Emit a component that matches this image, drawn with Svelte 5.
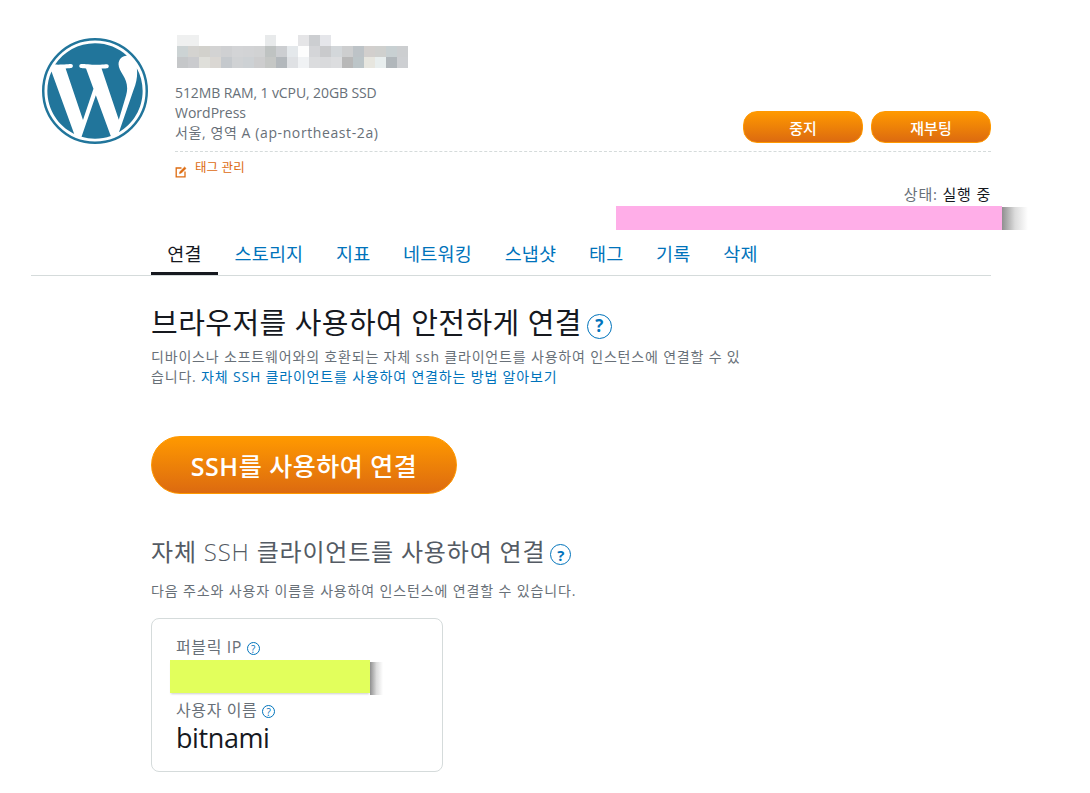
<script>
  const tabs = ["연결", "스토리지", "지표", "네트워킹", "스냅샷", "태그", "기록", "삭제"];
  const mosaic = [
    ["eff0f0", "eff0f0", "fff", "fff", "fff", "fff", "fff", "fff", "e8eaeb", "fff", "fff", "e5e5e7", "ccced1", "e5e6ea", "fff", "fff", "fff", "fff", "fff", "fff", "fff"],
    ["ccd3d4", "d4d3d0", "d2d1cc", "d3d3d3", "cfd0d2", "d3d4d6", "d2d3d5", "d1d2d3", "bfc3c2", "ccced1", "e4e8eb", "fdfdfd", "d4d5d8", "c9cacc", "d3d7da", "cdcecf", "bdc3c7", "d2cfcd", "cfd0ce", "c8d0d2", "ccced0"],
    ["c5c7c9", "cacbce", "dfdfda", "dad7d3", "c5c9cd", "d0d2d4", "cdd1d4", "cdcdce", "c5c7c5", "b3b8bc", "dfe1e4", "f0f2f4", "dbdcde", "d9dadc", "dcdddf", "b8b8b8", "bcc5c8", "e7e6df", "e8eeee", "b1b7bb", "cdcfd2"]
  ];
</script>

<div class="page">
  <header class="head">
    <svg class="logo" viewBox="0 0 24 24" aria-label="WordPress">
      <circle cx="12" cy="12" r="11.72" fill="none" stroke="#21759b" stroke-width=".56" />
      <path fill="#21759b" d="M21.469 6.825c.84 1.537 1.318 3.3 1.318 5.175 0 3.979-2.156 7.456-5.363 9.325l3.295-9.527c.615-1.54.82-2.771.82-3.864 0-.405-.026-.78-.07-1.11m-7.981.105c.647-.03 1.232-.105 1.232-.105.582-.075.514-.93-.067-.899 0 0-1.755.135-2.88.135-1.064 0-2.85-.15-2.85-.15-.585-.03-.661.855-.075.885 0 0 .54.061 1.125.09l1.68 4.605-2.37 7.08L5.354 6.9c.649-.03 1.234-.1 1.234-.1.585-.075.516-.93-.065-.896 0 0-1.746.138-2.874.138-.2 0-.438-.008-.69-.015C4.911 3.15 8.235 1.215 12 1.215c2.809 0 5.365 1.072 7.286 2.833-.046-.003-.091-.009-.141-.009-1.06 0-1.812.923-1.812 1.914 0 .89.513 1.643 1.06 2.531.411.72.89 1.643.89 2.977 0 .915-.354 1.994-.821 3.479l-1.075 3.585-3.9-11.61.001.014zM12 22.784c-1.059 0-2.081-.153-3.048-.437l3.237-9.406 3.315 9.087c.024.053.05.101.078.149-1.12.393-2.325.609-3.582.609M1.211 12c0-1.564.336-3.05.935-4.39L7.29 21.709C3.694 19.96 1.212 16.271 1.211 12" />
    </svg>
    <div class="info">
      <div class="mosaic">
        {#each mosaic as row}
          {#each row as c}
            <i style="background:#{c}"></i>
          {/each}
        {/each}
      </div>
      <div class="specs-row">
        <div class="specs">
          <div class="plan">512MB RAM, 1 vCPU, 20GB SSD</div>
          <div>WordPress</div>
          <div class="loc">서울, 영역 A (ap-northeast-2a)</div>
        </div>
        <div class="actions">
          <button class="btn" type="button">중지</button>
          <button class="btn" type="button">재부팅</button>
        </div>
      </div>
      <div class="tagline">
        <svg class="edit" viewBox="0 0 12 12" fill="none" stroke="#dd6b10" stroke-width="1.3">
          <path d="M6.5 2H1.2v8.8H10V5.5" />
          <path d="M4.5 7.6l.4-1.9L9.6 1l1.4 1.4-4.7 4.7z" fill="#dd6b10" stroke-width=".6" />
        </svg>
        <span>태그 관리</span>
      </div>
      <div class="status">상태: <b>실행 중</b></div>
    </div>
  </header>
  <div class="redact-pink"></div>

  <nav class="tabs">
    {#each tabs as t, i}
      <span class="tab" class:active={i === 0}>{t}</span>
    {/each}
  </nav>

  <main class="content">
    <h1>브라우저를 사용하여 안전하게 연결<span class="help big">?</span></h1>
    <p class="desc first">
      디바이스나 소프트웨어와의 호환되는 자체 ssh 클라이언트를 사용하여 인스턴스에 연결할 수 있<br />습니다. <a href="#top">자체 SSH 클라이언트를 사용하여 연결하는 방법 알아보기</a>
    </p>

    <button class="btn large" type="button"><span class="latin">SSH</span>를 사용하여 연결</button>

    <h2>자체 <span class="thin">SSH</span> 클라이언트를 사용하여 연결<span class="help mid">?</span></h2>
    <p class="desc second">다음 주소와 사용자 이름을 사용하여 인스턴스에 연결할 수 있습니다.</p>

    <section class="card">
      <div class="label">퍼블릭 IP <span class="help small">?</span></div>
      <div class="redact-yellow"></div>
      <div class="label">사용자 이름 <span class="help small">?</span></div>
      <div class="value">bitnami</div>
    </section>
  </main>
</div>

<style>
  :global(body) {
    background: #fff;
  }

  .page {
    height: 793px;
    overflow: hidden;
    box-sizing: border-box;
    padding: 35px 99px 0 31px;
    font-family: "Open Sans", "Noto Sans CJK KR", sans-serif;
    color: #687078;
  }

  .head {
    display: flex;
  }

  .logo {
    width: 106px;
    height: 106px;
    margin: 3px 27px 0 11px;
    flex: none;
  }

  .info {
    flex: 1;
    min-width: 0;
  }

  .mosaic {
    display: grid;
    grid-template-columns: repeat(21, 11px);
    grid-auto-rows: 11px;
    margin-left: 2px;
  }

  .specs-row {
    display: flex;
    justify-content: space-between;
    align-items: flex-end;
    margin-top: 15px;
    padding-bottom: 8px;
    border-bottom: 1px dashed #d5dbdb;
  }

  .specs {
    font-size: 14px;
    line-height: 20px;
  }

  .plan {
    letter-spacing: -0.1px;
  }

  .loc {
    letter-spacing: 0.6px;
  }

  .actions {
    display: flex;
    gap: 8px;
  }

  .btn {
    width: 120px;
    height: 32px;
    padding: 0;
    border: 1px solid #f90;
    border-radius: 14px;
    background: linear-gradient(#f90, #dc6a10);
    color: #fff;
    font: 500 15px "Open Sans", "Noto Sans CJK KR", sans-serif;
  }

  .tagline {
    display: flex;
    align-items: flex-start;
    gap: 8px;
    height: 25px;
    margin-top: 8px;
    font-size: 12.5px;
    line-height: 16px;
    letter-spacing: 0.1px;
    color: #dd6b10;
  }

  .edit {
    width: 12px;
    height: 12px;
    margin-top: 6px;
  }

  .status {
    text-align: right;
    font-size: 15px;
    line-height: 18px;
    letter-spacing: 0.8px;
  }

  .status b {
    font-weight: 400;
    color: #16191f;
  }

  .redact-pink {
    position: relative;
    width: 386px;
    height: 24px;
    margin: 3px 0 0 585px;
    background: #ffaee8;
  }

  .redact-pink::after {
    content: "";
    position: absolute;
    left: 100%;
    top: 1px;
    width: 26px;
    height: 23px;
    background: linear-gradient(90deg, #8f8f8f, #dcdcdc 50%, #fff);
  }

  .tabs {
    display: flex;
    margin-top: 6px;
    padding-left: 120px;
    border-bottom: 1px solid #d5dbdb;
  }

  .tab {
    padding: 0 16.33px;
    height: 39px;
    box-sizing: border-box;
    font-size: 18.5px;
    line-height: 36px;
    letter-spacing: 0.2px;
    color: #0073bb;
  }

  .tab.active {
    color: #16191f;
    border-bottom: 3px solid #16191f;
  }

  .content {
    padding-left: 120px;
  }

  h1 {
    margin: 27px 0 0;
    font-size: 29px;
    font-weight: 400;
    line-height: 40px;
    letter-spacing: 0.45px;
    color: #16191f;
  }

  h2 {
    margin: 42px 0 0;
    font-size: 24px;
    font-weight: 400;
    line-height: 32px;
    letter-spacing: 0.8px;
    color: #545b64;
  }

  .thin {
    font-weight: 300;
  }

  .latin {
    font-weight: 600;
  }

  .help {
    display: inline-flex;
    align-items: center;
    justify-content: center;
    box-sizing: border-box;
    border: 1px solid #0073bb;
    border-radius: 50%;
    color: #0073bb;
    font-weight: 700;
    letter-spacing: 0;
    vertical-align: middle;
  }

  .help.big {
    width: 25px;
    height: 25px;
    margin-left: 5px;
    font-size: 17px;
  }

  .help.mid {
    width: 21px;
    height: 21px;
    margin-left: 5px;
    font-size: 15px;
  }

  .help.small {
    width: 13px;
    height: 13px;
    font-size: 10px;
    font-weight: 400;
  }

  .desc {
    margin: 0;
    font-size: 14px;
    line-height: 20px;
    letter-spacing: 0.82px;
  }

  .desc a {
    color: #0073bb;
    text-decoration: none;
  }

  .desc.first {
    margin-top: 4px;
  }

  .desc.second {
    margin-top: 13px;
    letter-spacing: 0.86px;
  }

  .btn.large {
    display: block;
    width: 306px;
    height: 58px;
    margin-top: 49px;
    border-radius: 29px;
    font-size: 25px;
    letter-spacing: 0.5px;
  }

  .card {
    width: 292px;
    height: 154px;
    margin-top: 17px;
    box-sizing: border-box;
    padding: 18px 24px 0;
    border: 1px solid #d5dbdb;
    border-radius: 8px;
  }

  .label {
    font-size: 16px;
    line-height: 20px;
    letter-spacing: 0.6px;
  }

  .redact-yellow {
    position: relative;
    width: 200px;
    height: 33px;
    margin: 3px 0 7px -6px;
    background: #e2ff5c;
    box-shadow: 0 2px 2px -1px rgba(0, 0, 0, 0.2);
  }

  .redact-yellow::after {
    content: "";
    position: absolute;
    left: 100%;
    top: 2px;
    width: 13px;
    height: 33px;
    background: linear-gradient(90deg, #8f8f8f, #dcdcdc 50%, #fff);
  }

  .value {
    font-size: 27px;
    line-height: 34px;
    padding-top: 1px;
    letter-spacing: -0.4px;
    color: #16191f;
  }
</style>
